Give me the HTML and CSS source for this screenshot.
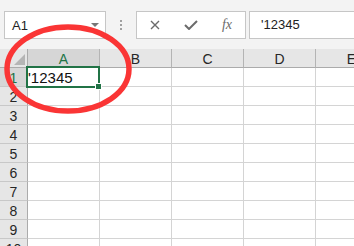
FILE: index.html
```html
<!DOCTYPE html>
<html lang="en">
<head>
  <meta charset="UTF-8" />
  <title>Sheet</title>
  <link rel="stylesheet" href="styles.css">
</head>
<body>
  <div class="toolbar">
    <div class="namebox">
      <span class="ref">A1</span>
      <span class="caret"></span>
    </div>
    <div class="grip"><i></i><i></i><i></i></div>
    <div class="fbtns">
      <span class="fbtn">
        <svg width="10" height="10" viewBox="0 0 10 10"><path d="M1 1L9 9M9 1L1 9" stroke="#6b6b6b" stroke-width="1.4" fill="none"/></svg>
      </span>
      <span class="fbtn">
        <svg width="14" height="10" viewBox="0 0 14 10"><path d="M1 5L5 9L13 1" stroke="#6b6b6b" stroke-width="2" fill="none"/></svg>
      </span>
      <span class="fbtn fx">fx</span>
    </div>
    <div class="formula">'12345</div>
  </div>

  <div class="sheet">
    <div class="corner"><span class="tri"></span></div>
    <div class="colhead active">A</div>
    <div class="colhead">B</div>
    <div class="colhead">C</div>
    <div class="colhead">D</div>
    <div class="colhead">E</div>

    <div class="rowhead active">1</div>
    <div class="cell selected">'12345</div>
    <div class="cell"></div><div class="cell"></div><div class="cell"></div><div class="cell"></div>

    <div class="rowhead">2</div>
    <div class="cell"></div><div class="cell"></div><div class="cell"></div><div class="cell"></div><div class="cell"></div>
    <div class="rowhead">3</div>
    <div class="cell"></div><div class="cell"></div><div class="cell"></div><div class="cell"></div><div class="cell"></div>
    <div class="rowhead">4</div>
    <div class="cell"></div><div class="cell"></div><div class="cell"></div><div class="cell"></div><div class="cell"></div>
    <div class="rowhead">5</div>
    <div class="cell"></div><div class="cell"></div><div class="cell"></div><div class="cell"></div><div class="cell"></div>
    <div class="rowhead">6</div>
    <div class="cell"></div><div class="cell"></div><div class="cell"></div><div class="cell"></div><div class="cell"></div>
    <div class="rowhead">7</div>
    <div class="cell"></div><div class="cell"></div><div class="cell"></div><div class="cell"></div><div class="cell"></div>
    <div class="rowhead">8</div>
    <div class="cell"></div><div class="cell"></div><div class="cell"></div><div class="cell"></div><div class="cell"></div>
    <div class="rowhead">9</div>
    <div class="cell"></div><div class="cell"></div><div class="cell"></div><div class="cell"></div><div class="cell"></div>
    <div class="rowhead">10</div>
    <div class="cell"></div><div class="cell"></div><div class="cell"></div><div class="cell"></div><div class="cell"></div>
  </div>

  <!-- red hand-drawn circle over A1 -->
  <svg class="mark" width="354" height="246" viewBox="0 0 354 246">
    <ellipse cx="68" cy="69" rx="61" ry="42" fill="none" stroke="#fa3535" stroke-width="5.5"/>
  </svg>
</body>
</html>
```

FILE: styles.css
```css
body {
  margin: 0;
  padding: 0;
  width: 354px;
  height: 246px;
  overflow: hidden;
  background: #ffffff;
  font-family: 'Liberation Sans', Arial, sans-serif;
  position: relative;
}
.toolbar {
  height: 49px;
  background-color: #f3f3f3;
  display: flex;
  align-items: flex-start;
  padding: 11px 0 0 4px;
  box-sizing: border-box;
}
.namebox {
  width: 102px;
  height: 28px;
  box-sizing: border-box;
  background: white;
  border: 1px solid #c6c6c6;
  display: flex;
  align-items: center;
  justify-content: space-between;
  padding: 0 6px 0 7px;
}
.ref {
  font-size: 13px;
  color: #222;
}
.caret {
  width: 0;
  height: 0;
  border-left: 4px solid transparent;
  border-right: 4px solid transparent;
  border-top: 4px solid #777;
}
.grip {
  width: 30px;
  height: 28px;
  display: flex;
  flex-direction: column;
  align-items: center;
  justify-content: center;
  gap: 2px;
}
.grip i {
  display: block;
  width: 2px;
  height: 2px;
  background: #a0a0a0;
}
.fbtns {
  width: 110px;
  height: 28px;
  box-sizing: border-box;
  background: white;
  border: 1px solid #c6c6c6;
  display: flex;
  align-items: center;
}
.fbtn {
  width: 36px;
  display: flex;
  justify-content: center;
  align-items: center;
}
.fx {
  font-family: 'Liberation Serif', 'Times New Roman', serif;
  font-style: italic;
  font-size: 14px;
  color: #6b6b6b;
}
.formula {
  flex: 1;
  height: 28px;
  box-sizing: border-box;
  margin-left: 3px;
  background: white;
  border: 1px solid #c6c6c6;
  border-right: none;
  font-size: 13px;
  line-height: 26px;
  padding-left: 11px;
  color: #222;
}
.sheet {
  display: grid;
  grid-template-columns: 28px repeat(5, 72px);
  grid-auto-rows: 19px;
}
.sheet > div {
  box-sizing: border-box;
  border-right: 1px solid #d4d4d4;
  border-bottom: 1px solid #d4d4d4;
}
.corner {
  background: #e6e6e6;
  position: relative;
  border-right-color: #ababab !important;
  border-bottom-color: #ababab !important;
}
.tri {
  position: absolute;
  right: 2px;
  bottom: 2px;
  width: 0;
  height: 0;
  border-left: 11px solid transparent;
  border-bottom: 11px solid #b5b5b5;
}
.colhead {
  background: #e6e6e6;
  border-right-color: #b4b4b4 !important;
  border-bottom-color: #ababab !important;
  text-align: center;
  font-size: 14px;
  line-height: 20px;
  color: #262626;
}
.colhead.active {
  background: #d6d6d6;
  color: #217346;
  border-bottom: 1px solid #217346 !important;
}
.rowhead {
  background: #e6e6e6;
  border-right-color: #ababab !important;
  border-bottom-color: #c8c8c8 !important;
  text-align: center;
  font-size: 14px;
  line-height: 20px;
  color: #262626;
}
.rowhead.active {
  background: #d6d6d6;
  color: #217346;
  border-right: 1px solid #217346 !important;
}
.cell {
  background: white;
}
.selected {
  position: relative;
  font-size: 15px;
  line-height: 20px;
  padding-left: 0;
  color: #111;
}
.selected::after {
  content: "";
  position: absolute;
  left: -2px;
  top: -2px;
  right: -1px;
  bottom: -2px;
  border: 2px solid #217346;
}
.selected::before {
  content: "";
  position: absolute;
  right: -3px;
  bottom: -4px;
  width: 5px;
  height: 5px;
  background: #217346;
  border: 1px solid white;
  z-index: 1;
}
.mark {
  position: absolute;
  left: 0;
  top: 0;
  pointer-events: none;
}
```
